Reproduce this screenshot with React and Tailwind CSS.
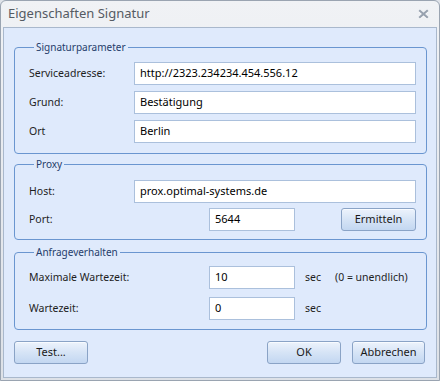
import React from "react";

const font = { fontFamily: '"Noto Sans", "Liberation Sans", sans-serif' };

function Input({ value, className = "" }) {
  return (
    <div
      className={`h-[23px] border border-[#abc0dc] bg-white flex items-center pl-[5px] text-[11px] text-[#000] whitespace-nowrap ${className}`}
    >
      {value}
    </div>
  );
}

function Button({ children, className = "" }) {
  return (
    <div
      className={`h-[23px] rounded-[3px] border border-[#8aa3c6] bg-gradient-to-b from-[#edf3fc] via-[#d6e4f6] to-[#c3d7f1] flex items-center justify-center text-[11px] text-[#1a1a1a] shadow-[inset_0_1px_0_#f8fbff] ${className}`}
    >
      {children}
    </div>
  );
}

function Group({ title, children, className = "" }) {
  return (
    <fieldset
      className={`border border-[#6a96d0] rounded-[4px] pl-[14px] pr-[10px] m-0 min-w-0 ${className}`}
    >
      <legend className="ml-[5px] px-[2px] text-[10px] leading-[14px] text-[#1f3d6b]">
        {title}
      </legend>
      {children}
    </fieldset>
  );
}

export default function App() {
  return (
    <div className="w-[440px] h-[381px] bg-[#dfe3e9]" style={font}>
      <div className="w-full h-full flex flex-col border border-[#9aa4b1] rounded-t-[6px] bg-gradient-to-b from-[#f0f2f5] to-[#dde1e7]">
        <div className="h-[26px] flex items-center justify-between pl-[7px] pr-[10px] shrink-0">
          <span className="text-[13px] text-[#555b63]">Eigenschaften Signatur</span>
          <svg width="11" height="10" viewBox="0 0 11 10">
            <path d="M1.2 1.2 L9.8 8.8 M9.8 1.2 L1.2 8.8" stroke="#ffffff" strokeWidth="2.4" opacity="0.7" transform="translate(0,1)" />
            <path d="M1.2 1.2 L9.8 8.8 M9.8 1.2 L1.2 8.8" stroke="#98a2af" strokeWidth="2.1" />
          </svg>
        </div>
        <div className="flex-1 mx-[2px] mb-[2px] border border-[#a9b8cc] bg-[#dfeafc] pl-[10px] pr-[9px] pt-[12px] flex flex-col text-[#1e1e1e] text-[10.5px]">
          <Group title="Signaturparameter" className="pt-[8px] pb-[10px]">
            <div className="flex flex-col gap-[6px]">
              <div className="flex items-center">
                <span className="w-[105px] shrink-0">Serviceadresse:</span>
                <Input value="http://2323.234234.454.556.12" className="flex-1" />
              </div>
              <div className="flex items-center">
                <span className="w-[105px] shrink-0">Grund:</span>
                <Input value="Bestätigung" className="flex-1" />
              </div>
              <div className="flex items-center">
                <span className="w-[105px] shrink-0">Ort</span>
                <Input value="Berlin" className="flex-1" />
              </div>
            </div>
          </Group>
          <Group title="Proxy" className="mt-[3px] pt-[9px] pb-[8px]">
            <div className="flex flex-col gap-[5px]">
              <div className="flex items-center">
                <span className="w-[105px] shrink-0">Host:</span>
                <Input value="prox.optimal-systems.de" className="flex-1" />
              </div>
              <div className="flex items-center">
                <span className="w-[180px] shrink-0">Port:</span>
                <Input value="5644" className="w-[86px]" />
                <div className="flex-1" />
                <Button className="w-[75px]">Ermitteln</Button>
              </div>
            </div>
          </Group>
          <Group title="Anfrageverhalten" className="mt-[5px] pt-[7px] pb-[9px]">
            <div className="flex flex-col gap-[8px]">
              <div className="flex items-center whitespace-nowrap">
                <span className="w-[180px] shrink-0">Maximale Wartezeit:</span>
                <Input value="10" className="w-[86px]" />
                <span className="ml-[10px] w-[30px]">sec</span>
                <span>(0 = unendlich)</span>
              </div>
              <div className="flex items-center">
                <span className="w-[180px] shrink-0">Wartezeit:</span>
                <Input value="0" className="w-[86px]" />
                <span className="ml-[10px]">sec</span>
              </div>
            </div>
          </Group>
          <div className="mt-[11px] flex items-center">
            <Button className="w-[74px]">Test...</Button>
            <div className="flex-1" />
            <Button className="w-[74px]">OK</Button>
            <Button className="w-[73px] ml-[11px] mr-[2px]">Abbrechen</Button>
          </div>
        </div>
      </div>
    </div>
  );
}
